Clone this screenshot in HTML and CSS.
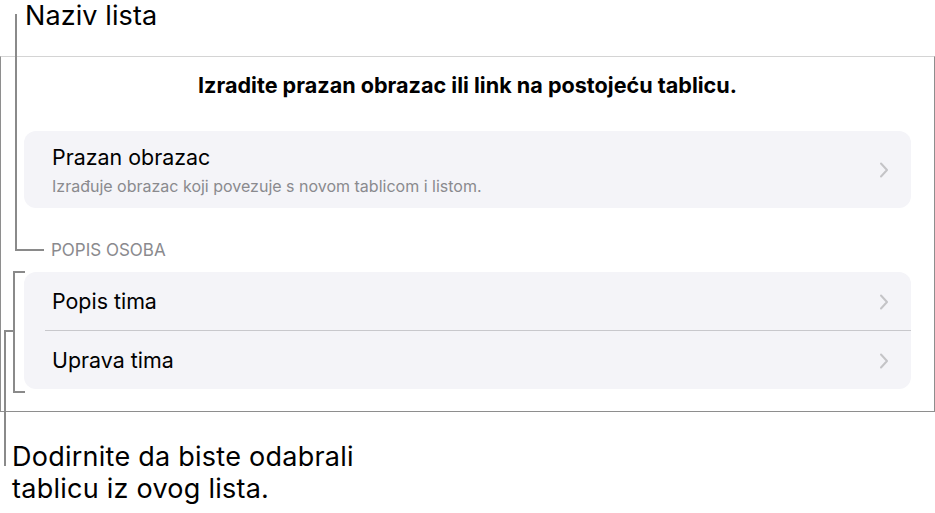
FILE: index.html
```html
<!DOCTYPE html>
<html lang="hr">
<head>
<meta charset="utf-8">
<title>Obrazac</title>
<link rel="stylesheet" href="styles.css">
</head>
<body>
<div class="page">
  <div class="label-top">Naziv lista</div>
  <div class="frame">
    <h1 class="heading">Izradite prazan obrazac ili link na postojeću tablicu.</h1>
    <div class="card">
      <div class="row row-tall">
        <div class="row-text">
          <div class="row-title">Prazan obrazac</div>
          <div class="row-sub">Izrađuje obrazac koji povezuje s novom tablicom i listom.</div>
        </div>
        <svg class="chev" viewBox="0 0 10 16" width="10" height="16"><path d="M2 1.5 L8 8 L2 14.5" fill="none" stroke="#c4c4c7" stroke-width="2" stroke-linecap="round" stroke-linejoin="round"/></svg>
      </div>
    </div>
    <div class="section-head">POPIS OSOBA</div>
    <div class="card">
      <div class="row">
        <div class="row-title">Popis tima</div>
        <svg class="chev" viewBox="0 0 10 16" width="10" height="16"><path d="M2 1.5 L8 8 L2 14.5" fill="none" stroke="#c4c4c7" stroke-width="2" stroke-linecap="round" stroke-linejoin="round"/></svg>
      </div>
      <div class="sep"></div>
      <div class="row">
        <div class="row-title">Uprava tima</div>
        <svg class="chev" viewBox="0 0 10 16" width="10" height="16"><path d="M2 1.5 L8 8 L2 14.5" fill="none" stroke="#c4c4c7" stroke-width="2" stroke-linecap="round" stroke-linejoin="round"/></svg>
      </div>
    </div>
  </div>
  <div class="label-bottom">Dodirnite da biste odabrali<br>tablicu iz ovog lista.</div>
  <svg class="callouts" width="935" height="513" viewBox="0 0 935 513">
    <path d="M16 14 V250 H44" fill="none" stroke="#8a8a8a" stroke-width="2"/>
    <path d="M25 272 H14 V392 H25" fill="none" stroke="#8a8a8a" stroke-width="2"/>
    <path d="M14 331 H5 V466" fill="none" stroke="#8a8a8a" stroke-width="2"/>
  </svg>
</div>
</body>
</html>
```
FILE: styles.css
```css
html, body {
  margin: 0;
  padding: 0;
  background: #ffffff;
}
body {
  font-family: Inter, "Liberation Sans", sans-serif;
  color: #000;
}
.page {
  position: relative;
  width: 935px;
  height: 513px;
  overflow: hidden;
}
.label-top {
  height: 56px;
  box-sizing: border-box;
  padding-left: 25px;
  font-size: 27px;
  line-height: 31px;
  letter-spacing: 0.1px;
}
.frame {
  box-sizing: border-box;
  width: 935px;
  height: 356px;
  border-top: 1px solid #d4d4d4;
  border-left: 1px solid #8e8e8e;
  border-right: 1px solid #8e8e8e;
  border-bottom: 1px solid #8e8e8e;
  padding: 0 23px 0 23px;
}
.heading {
  margin: 0;
  padding-top: 14px;
  height: 74px;
  box-sizing: border-box;
  text-align: center;
  font-size: 21.6px;
  line-height: 28px;
  font-weight: 700;
  letter-spacing: 0;
}
.card {
  background: #f4f4f8;
  border-radius: 12px;
  overflow: hidden;
}
.row {
  height: 58px;
  display: flex;
  align-items: center;
  justify-content: space-between;
  padding: 0 22px 0 28px;
}
.row-tall {
  height: 77px;
  box-sizing: border-box;
}
.row-text {
  display: flex;
  flex-direction: column;
  gap: 7px;
  align-self: flex-start;
  padding-top: 14px;
}
.row-title {
  font-size: 21.4px;
  line-height: 24px;
}
.row-sub {
  font-size: 16px;
  line-height: 20px;
  color: #8a8a8e;
}
.chev {
  display: block;
  margin-top: 1px;
}
.sep {
  height: 1px;
  background: #c8c8cc;
  margin-left: 21px;
}
.section-head {
  height: 64px;
  box-sizing: border-box;
  padding-top: 31px;
  padding-left: 27px;
  font-size: 17px;
  line-height: 22px;
  color: #8a8a8e;
}
.label-bottom {
  padding-left: 12px;
  padding-top: 29px;
  font-size: 27px;
  line-height: 32px;
  letter-spacing: 0.25px;
}
.callouts {
  position: absolute;
  left: 0;
  top: 0;
  pointer-events: none;
}
```
